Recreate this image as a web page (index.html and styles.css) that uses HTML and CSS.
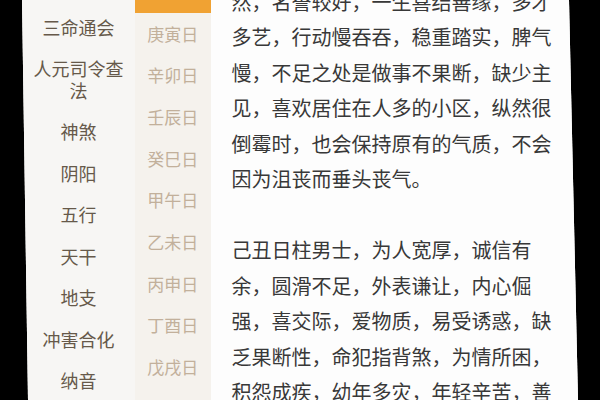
FILE: index.html
```html
<!DOCTYPE html>
<html lang="zh-CN">
<head>
<meta charset="utf-8">
<title>日柱</title>
<link rel="stylesheet" href="styles.css">
</head>
<body>
<div class="app">
  <nav class="menu">
    <div class="menu-item">三命通会</div>
    <div class="menu-item">人元司令查法</div>
    <div class="menu-item">神煞</div>
    <div class="menu-item">阴阳</div>
    <div class="menu-item">五行</div>
    <div class="menu-item">天干</div>
    <div class="menu-item">地支</div>
    <div class="menu-item">冲害合化</div>
    <div class="menu-item">纳音</div>
  </nav>
  <div class="days">
    <div class="day active">己丑日</div>
    <div class="day">庚寅日</div>
    <div class="day">辛卯日</div>
    <div class="day">壬辰日</div>
    <div class="day">癸巳日</div>
    <div class="day">甲午日</div>
    <div class="day">乙未日</div>
    <div class="day">丙申日</div>
    <div class="day">丁酉日</div>
    <div class="day">戊戌日</div>
  </div>
  <main class="content">
    <p class="para first">然，名誉较好，一生喜结善缘，多才多艺，行动慢吞吞，稳重踏实，脾气慢，不足之处是做事不果断，缺少主见，喜欢居住在人多的小区，纵然很倒霉时，也会保持原有的气质，不会因为沮丧而垂头丧气。</p>
    <p class="para">己丑日柱男士，为人宽厚，诚信有余，圆滑不足，外表谦让，内心倔强，喜交际，爱物质，易受诱惑，缺乏果断性，命犯指背煞，为情所困，积怨成疾，幼年多灾，年轻辛苦，善于理财。</p>
  </main>
</div>
</body>
</html>
```
FILE: styles.css
```css
html, body {
  margin: 0;
  padding: 0;
  background: #000;
}
body {
  width: 600px;
  height: 400px;
  overflow: hidden;
  font-family: "Noto Sans CJK SC", "Noto Sans", sans-serif;
}
.app {
  margin-left: 22px;
  width: 556px;
  height: 400px;
  display: flex;
  overflow: hidden;
  background: #fdfdfc;
  clip-path: polygon(0 0, 547px 0, 556px 100%, 6px 100%);
}
.menu {
  width: 113px;
  flex: none;
  background: #f7f6f4;
  padding: 6.75px 8px 0;
  box-sizing: border-box;
  text-align: center;
}
.menu-item {
  font-size: 18px;
  line-height: 21.5px;
  padding: 10px 0;
  color: #66594a;
}
.days {
  width: 75.5px;
  flex: none;
  background: #f5f2ed;
  margin-top: -29.2px;
  text-align: center;
}
.day {
  height: 41.7px;
  line-height: 41.7px;
  font-size: 17px;
  color: #c2b09b;
}
.day.active {
  box-sizing: border-box;
  line-height: 26px;
  padding-bottom: 15.7px;
  background: #f0a233;
  color: #fff;
}
.content {
  flex: 1;
  padding-left: 21px;
  background: #fdfdfd;
}
.para {
  width: 330px;
  margin: 0 0 36px;
  font-size: 20px;
  line-height: 35.4px;
  color: #383838;
}
.para.first {
  margin-top: -16px;
}
```
